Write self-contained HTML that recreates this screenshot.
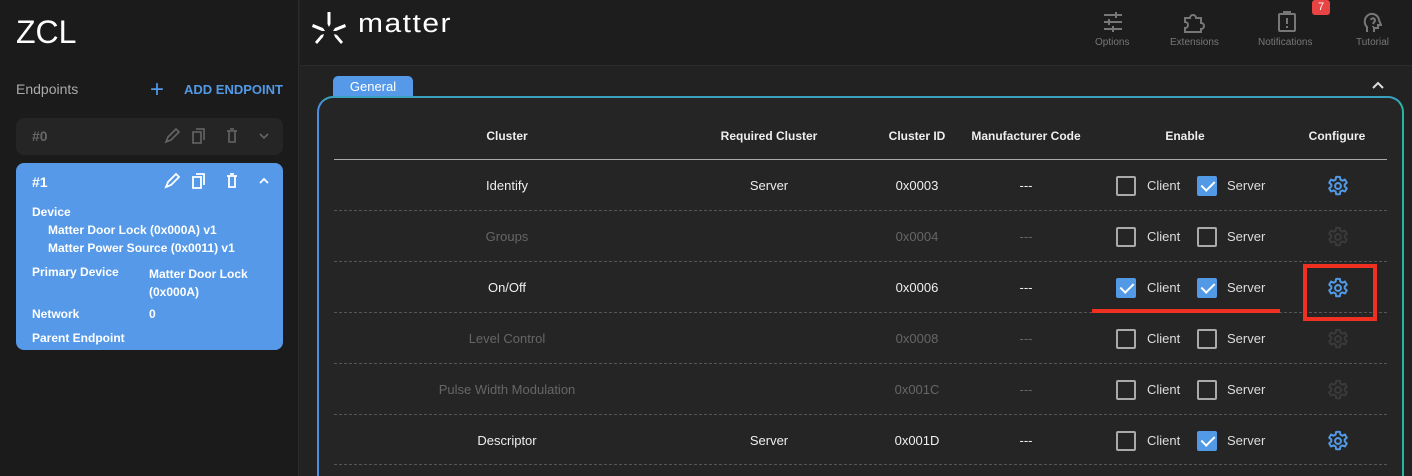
<!DOCTYPE html>
<html><head><style>
*{margin:0;padding:0;box-sizing:border-box}
html,body{width:1412px;height:476px;overflow:hidden}
body{background:#222;font-family:"Liberation Sans",Roboto,sans-serif;position:relative;color:#eee}
.side{position:absolute;left:0;top:0;width:299px;height:476px;background:#1b1b1b;border-right:1px solid #2c2c2c}
.hdr{position:absolute;left:300px;top:0;width:1112px;height:66px;background:#1d1d1d;border-bottom:1px solid #2a2a2a}
.a{position:absolute;white-space:nowrap}
.ep{position:absolute;left:16px;width:267px;border-radius:8px}
.card{position:absolute;left:317px;top:96px;width:1087px;height:380px;border:2px solid #2bb3a3;border-bottom:none;border-left-color:#4a8fe0;border-top-color:#3aa0c0;border-radius:16px 16px 0 0;background:#252525}
.row{position:absolute;left:334px;width:1053px;height:51px;border-bottom:1px dashed #555;font-size:13px}
.c{position:absolute;top:0;line-height:51px;text-align:center;transform:translateX(-50%)}
.cb{position:absolute;top:16px;width:20px;height:20px;border:2px solid #aaa;border-radius:2px}
.cb.on{background:#5299e6;border-color:#5299e6}
.cb.on::after{content:"";position:absolute;left:5px;top:0px;width:6px;height:11px;border:solid #fff;border-width:0 2px 2px 0;transform:rotate(45deg)}
.lb{position:absolute;top:0;line-height:51px;color:#ddd}
.dim{color:#666}
.g{position:absolute;left:993px;top:15px}
</style></head><body>
<svg width="0" height="0" style="position:absolute"><defs><g id="gear" fill="none" stroke-width="2.2" stroke-linejoin="round"><path d="M10 2h4l.6 3 2.2 1.2 2.8-1.2 2 3.4-2.3 2v2.2l2.3 2-2 3.4-2.8-1.2-2.2 1.2-.6 3h-4l-.6-3-2.2-1.2-2.8 1.2-2-3.4 2.3-2v-2.2l-2.3-2 2-3.4 2.8 1.2L9.4 5z"/><circle cx="12" cy="12" r="3.2"/></g></defs></svg>
<div class="side">
<div class="a" style="left:16px;top:14px;font-size:32px;color:#fff">ZCL</div>
<div class="a" style="left:16px;top:81px;font-size:14px;color:#aaa">Endpoints</div>
<div class="a" style="left:150px;top:76px;font-size:24px;color:#5299e6">+</div>
<div class="a" style="left:184px;top:82px;font-size:13px;font-weight:bold;color:#5299e6">ADD ENDPOINT</div>
<div class="ep" style="top:118px;height:37px;background:#252525">
<div class="a" style="left:16px;top:10px;font-size:14px;font-weight:bold;color:#666">#0</div>
<svg class="a" style="left:147px;top:8px" width="110" height="20" fill="none" stroke="#666" stroke-width="1.6"><path d="M3 16l2-5 8-8 3 3-8 8z"/><path d="M33 3h8v11M30 6h8v11h-8z"/><path d="M64 5h10M66 5v11h6V5M67 3h4"/><path d="M97 8l4 4 4-4"/></svg>
</div>
<div class="ep" style="top:163px;height:187px;background:#5599e8;color:#fff;font-weight:bold;font-size:12px">
<div class="a" style="left:16px;top:11px;font-size:14px">#1</div>
<svg class="a" style="left:147px;top:8px" width="110" height="20" fill="none" stroke="#fff" stroke-width="1.8"><path d="M3 16l2-5 8-8 3 3-8 8z"/><path d="M33 3h8v11M30 6h8v11h-8z"/><path d="M64 5h10M66 5v11h6V5M67 3h4"/><path d="M97 12l4-4 4 4"/></svg>
<div class="a" style="left:16px;top:42px">Device</div>
<div class="a" style="left:32px;top:60px">Matter Door Lock (0x000A) v1</div>
<div class="a" style="left:32px;top:78px">Matter Power Source (0x0011) v1</div>
<div class="a" style="left:16px;top:102px">Primary Device</div>
<div class="a" style="left:133px;top:102px;line-height:18px">Matter Door Lock<br>(0x000A)</div>
<div class="a" style="left:16px;top:144px">Network</div>
<div class="a" style="left:133px;top:144px">0</div>
<div class="a" style="left:16px;top:168px">Parent Endpoint</div>
</div>
</div>
<div class="hdr">
<svg class="a" style="left:12px;top:12px" width="34" height="32" fill="#fff"><path d="M15.5 0h3v12l-1.5 3-1.5-3z"/><path d="M1 12l10 4 2 3-3 0L0 15z"/><path d="M33 12l-10 4-2 3 3 0 10-4z"/><path d="M3 30l6-7 3-1-1 3-6 7z"/><path d="M31 30l-6-7-3-1 1 3 6 7z"/></svg>
<div class="a" style="left:58px;top:10px;font-size:30px;color:#fff;letter-spacing:1.5px;transform:scaleY(0.85);transform-origin:top left">matter</div>
<svg class="a" style="left:802px;top:12px" width="22" height="20" fill="none" stroke="#777" stroke-width="2"><path d="M2 3h18M2 10h18M2 17h18"/><path d="M14 0v6M7 7v6M11 14v6" /></svg>
<div class="a" style="left:795px;top:37px;font-size:10px;color:#777">Options</div>
<svg class="a" style="left:881px;top:11px" width="24" height="22" fill="none" stroke="#777" stroke-width="2"><path d="M4 7h5a3 3 0 1 1 6 0h5v5a3 3 0 1 1 0 6v3H4v-4a3 3 0 1 0 0-6z"/></svg>
<div class="a" style="left:870px;top:37px;font-size:10px;color:#777">Extensions</div>
<svg class="a" style="left:977px;top:11px" width="20" height="22" fill="none" stroke="#777" stroke-width="2"><rect x="2" y="3" width="16" height="17" rx="1"/><path d="M7 3V1h6v2M10 7v6M10 15v2"/></svg>
<div class="a" style="left:1012px;top:0;width:18px;height:15px;background:#e84444;border-radius:3px;font-size:11px;text-align:center;line-height:15px;color:#fff">7</div>
<div class="a" style="left:958px;top:37px;font-size:10px;color:#777">Notifications</div>
<svg class="a" style="left:1062px;top:11px" width="20" height="22" fill="none" stroke="#777" stroke-width="2"><path d="M5 21v-5C2 13 2 8 5 5c4-4 11-2 12 4l2 5h-3v3h-4v4"/><path d="M9 9a2 2 0 1 1 3 2l-1 2M11 15v1"/></svg>
<div class="a" style="left:1056px;top:37px;font-size:10px;color:#777">Tutorial</div>
</div>
<div class="a" style="left:333px;top:76px;width:80px;height:21px;background:#5599e8;border-radius:5px 5px 0 0;color:#fff;font-size:13px;text-align:center;line-height:21px">General</div>
<svg class="a" style="left:1371px;top:80px" width="14" height="10" fill="none" stroke="#ddd" stroke-width="2"><path d="M2 8l5-5 5 5"/></svg>
<div class="card"></div>
<div class="row" style="top:111px;height:49px;border-bottom:1px solid #aaa;font-size:12px;font-weight:bold;color:#eee">
<div class="c" style="left:173px">Cluster</div><div class="c" style="left:435px">Required Cluster</div><div class="c" style="left:583px">Cluster ID</div><div class="c" style="left:692px">Manufacturer Code</div><div class="c" style="left:851px">Enable</div><div class="c" style="left:1003px">Configure</div>
</div>
<div class="row" style="top:160px"><div class="c" style="left:173px">Identify</div><div class="c" style="left:435px">Server</div><div class="c" style="left:583px">0x0003</div><div class="c" style="left:692px">---</div>
<div class="cb" style="left:782px"></div><div class="lb" style="left:813px">Client</div><div class="cb on" style="left:863px"></div><div class="lb" style="left:893px">Server</div>
<svg class="g" width="22" height="22" viewBox="0 0 24 24" stroke="#5299e6"><use href="#gear"/></svg></div>
<div class="row dim" style="top:211px"><div class="c" style="left:173px">Groups</div><div class="c" style="left:583px">0x0004</div><div class="c" style="left:692px">---</div>
<div class="cb" style="left:782px"></div><div class="lb" style="left:813px">Client</div><div class="cb" style="left:863px"></div><div class="lb" style="left:893px">Server</div>
<svg class="g" width="22" height="22" viewBox="0 0 24 24" stroke="#3a3a3a"><use href="#gear"/></svg></div>
<div class="row" style="top:262px"><div class="c" style="left:173px">On/Off</div><div class="c" style="left:583px">0x0006</div><div class="c" style="left:692px">---</div>
<div class="cb on" style="left:782px"></div><div class="lb" style="left:813px">Client</div><div class="cb on" style="left:863px"></div><div class="lb" style="left:893px">Server</div>
<svg class="g" width="22" height="22" viewBox="0 0 24 24" stroke="#5299e6"><use href="#gear"/></svg></div>
<div class="row dim" style="top:313px"><div class="c" style="left:173px">Level Control</div><div class="c" style="left:583px">0x0008</div><div class="c" style="left:692px">---</div>
<div class="cb" style="left:782px"></div><div class="lb" style="left:813px">Client</div><div class="cb" style="left:863px"></div><div class="lb" style="left:893px">Server</div>
<svg class="g" width="22" height="22" viewBox="0 0 24 24" stroke="#3a3a3a"><use href="#gear"/></svg></div>
<div class="row dim" style="top:364px"><div class="c" style="left:173px">Pulse Width Modulation</div><div class="c" style="left:583px">0x001C</div><div class="c" style="left:692px">---</div>
<div class="cb" style="left:782px"></div><div class="lb" style="left:813px">Client</div><div class="cb" style="left:863px"></div><div class="lb" style="left:893px">Server</div>
<svg class="g" width="22" height="22" viewBox="0 0 24 24" stroke="#3a3a3a"><use href="#gear"/></svg></div>
<div class="row" style="top:415px;height:50px"><div class="c" style="left:173px">Descriptor</div><div class="c" style="left:435px">Server</div><div class="c" style="left:583px">0x001D</div><div class="c" style="left:692px">---</div>
<div class="cb" style="left:782px"></div><div class="lb" style="left:813px">Client</div><div class="cb on" style="left:863px"></div><div class="lb" style="left:893px">Server</div>
<svg class="g" width="22" height="22" viewBox="0 0 24 24" stroke="#5299e6"><use href="#gear"/></svg></div>
<div class="a" style="left:1092px;top:309px;width:188px;height:4px;background:#f03020"></div>
<div class="a" style="left:1303px;top:264px;width:74px;height:57px;border:4px solid #f03020"></div>
</body></html>
